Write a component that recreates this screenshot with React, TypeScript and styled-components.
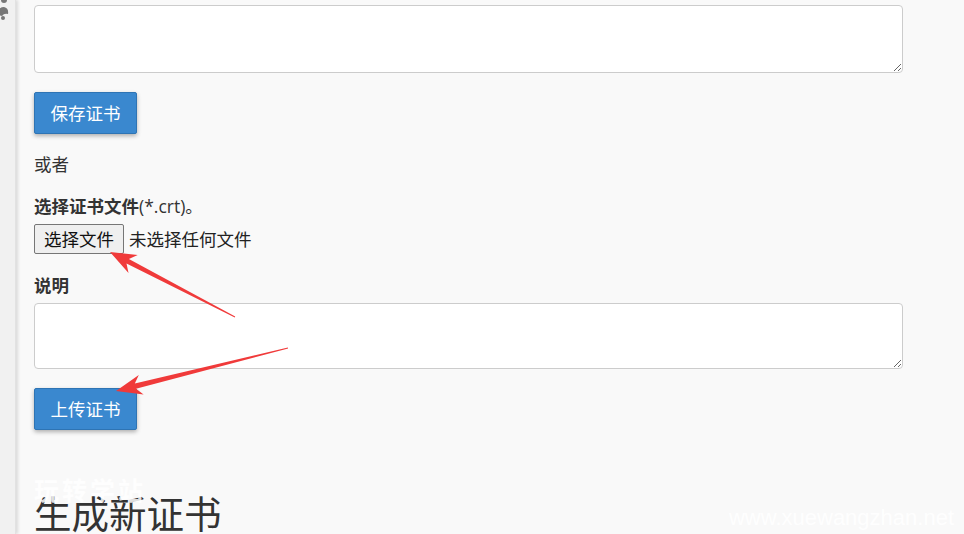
import styled, { createGlobalStyle } from 'styled-components'

const GlobalStyle = createGlobalStyle`
  html, body {
    margin: 0;
    padding: 0;
    background: #f9f9f9;
    overflow: hidden;
  }
  body {
    font-family: "Open Sans", "Noto Sans CJK SC", sans-serif;
    color: #333;
  }
`

const Page = styled.div`
  position: relative;
  display: flex;
  width: 964px;
  height: 534px;
  overflow: hidden;
`

const Sidebar = styled.div`
  position: relative;
  width: 15px;
  flex-shrink: 0;
  background: #f1f1f1;
  box-shadow: 2px 0 3px rgba(0, 0, 0, 0.12);
  border-right: 1px solid #e2e2e2;
  overflow: hidden;
`

const SideIcon = styled.svg`
  position: absolute;
  left: -7px;
  top: -2px;
`

const Main = styled.div`
  display: flex;
  flex-direction: column;
  align-items: flex-start;
  padding-left: 18px;
  width: 869px;
`

const TextArea = styled.textarea<{ $top: number; $height: number }>`
  display: block;
  box-sizing: border-box;
  width: 869px;
  height: ${(p) => p.$height}px;
  margin: ${(p) => p.$top}px 0 0;
  background: #fff;
  border: 1px solid #cccccc;
  border-radius: 4px;
  font-family: inherit;
  font-size: 17px;
`

const Button = styled.button`
  box-sizing: border-box;
  width: 103px;
  height: 42px;
  margin-top: 19px;
  background: #3a88cf;
  border: 1px solid #2e74b4;
  border-radius: 2px;
  box-shadow: 0 2px 4px rgba(0, 0, 0, 0.3);
  color: #fff;
  font-family: "Noto Sans CJK SC", sans-serif;
  font-size: 17.5px;
  line-height: 40px;
  padding: 0 0 1px;
`

const Text = styled.div<{ $top: number; $bold?: boolean }>`
  margin-top: ${(p) => p.$top}px;
  font-size: 17.5px;
  line-height: 24px;
  font-weight: ${(p) => (p.$bold ? 700 : 400)};
  color: #333;
`

const Plain = styled.span`
  font-weight: 400;
`

const FileRow = styled.div`
  display: flex;
  align-items: center;
  gap: 5px;
  margin-top: 6px;
  height: 30px;
`

const FileButton = styled.span`
  box-sizing: border-box;
  display: inline-flex;
  align-items: center;
  justify-content: center;
  width: 90px;
  height: 30px;
  background: #efefef;
  border: 1px solid #767676;
  border-radius: 2px;
  font-family: "Noto Sans CJK SC", sans-serif;
  font-size: 17.5px;
  color: #111;
`

const FileName = styled.span`
  font-family: "Noto Sans CJK SC", sans-serif;
  font-size: 17.5px;
  color: #222;
`

const Heading = styled.h2`
  position: relative;
  margin: 60px 0 0;
  font-family: "Noto Sans CJK SC", sans-serif;
  font-weight: 400;
  font-size: 37.5px;
  line-height: 44px;
  color: #333;
`

const Watermark = styled.span`
  position: absolute;
  left: 0;
  top: -16px;
  font-family: "Noto Sans CJK SC", sans-serif;
  font-weight: 700;
  font-size: 25px;
  line-height: 30px;
  letter-spacing: 3px;
  color: rgba(255, 255, 255, 0.85);
  white-space: nowrap;
`

const SiteMark = styled.span`
  position: absolute;
  right: 10px;
  bottom: 3px;
  font-family: "Liberation Sans", sans-serif;
  font-size: 22px;
  color: rgba(255, 255, 255, 0.9);
`

const Overlay = styled.svg`
  position: absolute;
  left: 0;
  top: 0;
  pointer-events: none;
`

type Pt = [number, number]

const arrowPoints = (tail: Pt, tip: Pt) => {
  const dx = tip[0] - tail[0]
  const dy = tip[1] - tail[1]
  const len = Math.hypot(dx, dy)
  const ux = dx / len
  const uy = dy / len
  const nx = -uy
  const ny = ux
  const headLen = 26
  const back = 20
  const headW = 10
  const shaftW = 2.6
  const bx = tip[0] - ux * back
  const by = tip[1] - uy * back
  const hx = tip[0] - ux * headLen
  const hy = tip[1] - uy * headLen
  const pts: Pt[] = [
    [tail[0] + nx * 0.4, tail[1] + ny * 0.4],
    [bx + nx * shaftW, by + ny * shaftW],
    [hx + nx * headW, hy + ny * headW],
    tip,
    [hx - nx * headW, hy - ny * headW],
    [bx - nx * shaftW, by - ny * shaftW],
    [tail[0] - nx * 0.4, tail[1] - ny * 0.4],
  ]
  return pts.map((p) => `${p[0].toFixed(1)},${p[1].toFixed(1)}`).join(' ')
}

export default function App() {
  return (
    <Page>
      <GlobalStyle />
      <Sidebar>
        <SideIcon width="16" height="24" viewBox="0 0 16 24">
          <circle cx="11" cy="2" r="3" fill="#777" />
          <path d="M4 17 Q5 9 11 9 Q16 10 15 16 Q11 15 9 18 Z" fill="#777" />
          <circle cx="10" cy="20" r="2" fill="#777" />
        </SideIcon>
      </Sidebar>
      <Main>
        <TextArea $top={5} $height={68} />
        <Button>保存证书</Button>
        <Text $top={18}>或者</Text>
        <Text $top={18} $bold>
          选择证书文件<Plain>(*.crt)。</Plain>
        </Text>
        <FileRow>
          <FileButton>选择文件</FileButton>
          <FileName>未选择任何文件</FileName>
        </FileRow>
        <Text $top={19} $bold>
          说明
        </Text>
        <TextArea $top={6} $height={67} />
        <Button>上传证书</Button>
        <Heading>
          <Watermark>玩转学站</Watermark>
          生成新证书
        </Heading>
      </Main>
      <SiteMark>www.xuewangzhan.net</SiteMark>
      <Overlay width="964" height="534" viewBox="0 0 964 534">
        <polygon points={arrowPoints([235, 317], [110, 252])} fill="#f03a3a" />
        <polygon points={arrowPoints([288, 348], [116, 391])} fill="#f03a3a" />
      </Overlay>
    </Page>
  )
}
